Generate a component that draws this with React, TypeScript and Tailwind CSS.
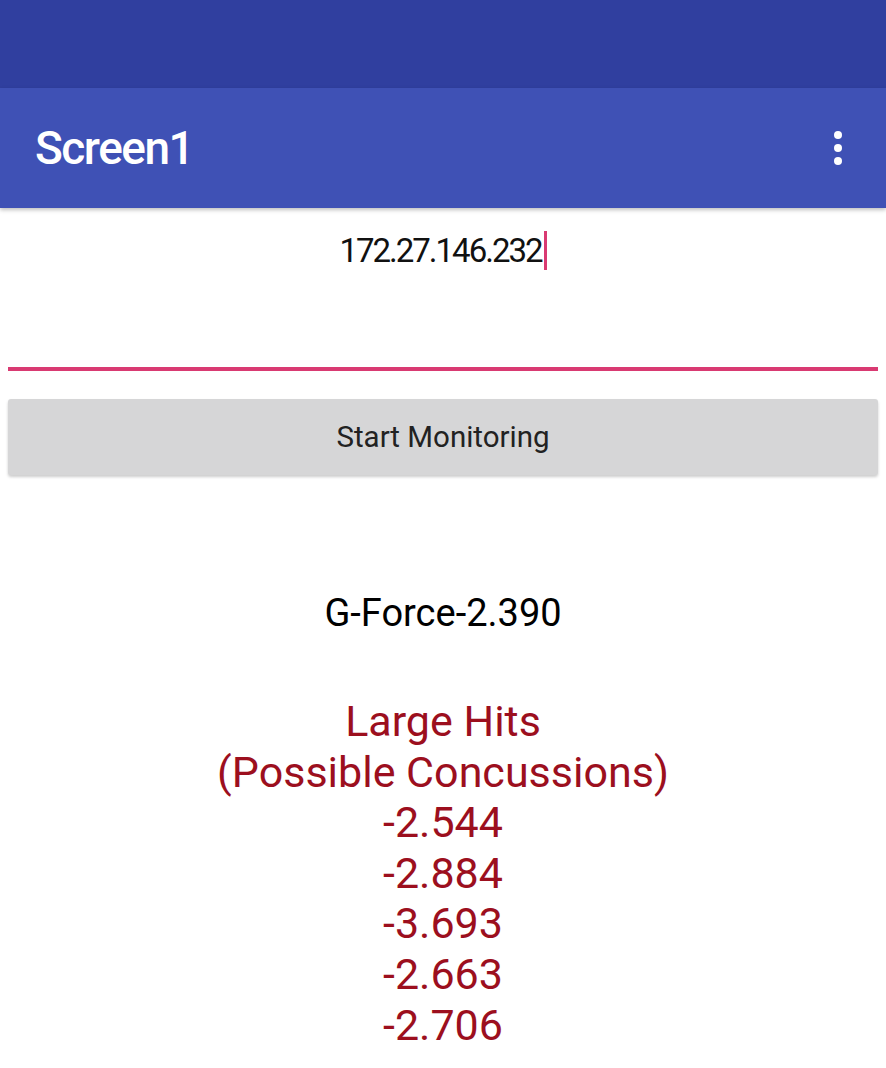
export default function App() {
  const hits = ['-2.544', '-2.884', '-3.693', '-2.663', '-2.706'];

  return (
    <div className="min-h-screen bg-white font-['Roboto',sans-serif]">
      {/* status bar */}
      <div className="h-[88px] bg-[#303f9f]" />

      {/* app bar */}
      <div className="relative z-10 flex h-[120px] items-center justify-between bg-[#3f51b5] pl-[35px] pr-[44px] shadow-[0_2px_4px_rgba(0,0,0,0.25)]">
        <span className="text-[46px] font-medium leading-none tracking-[-1.5px] text-white">Screen1</span>
        <div className="flex flex-col gap-[5px]">
          <span className="h-[8px] w-[8px] rounded-full bg-white" />
          <span className="h-[8px] w-[8px] rounded-full bg-white" />
          <span className="h-[8px] w-[8px] rounded-full bg-white" />
        </div>
      </div>

      {/* address field */}
      <div className="px-[8px]">
        <div className="flex h-[163px] justify-center border-b-4 border-[#d93a72] pt-[23px]">
          <span className="text-[33px] leading-[40px] tracking-[-2px] text-[#111]">172.27.146.232</span>
          <span className="ml-[2px] h-[39px] w-[3px] bg-[#d93a72]" />
        </div>

        <button className="mt-[28px] flex h-[76px] w-full items-center justify-center rounded-[3px] bg-[#d6d6d7] text-[29.5px] text-[#222] shadow-[0_2px_3px_rgba(0,0,0,0.2)]">
          Start Monitoring
        </button>
      </div>

      {/* readings */}
      <div className="mt-[116px] text-center text-[38px] leading-[44px] text-black">G-Force-2.390</div>

      <div className="mt-[61px] flex flex-col items-center text-[43px] leading-[50.6px] text-[#9c0f1e]">
        <span>Large Hits</span>
        <span>(Possible Concussions)</span>
        {hits.map((h) => (
          <span key={h}>{h}</span>
        ))}
      </div>
    </div>
  );
}
